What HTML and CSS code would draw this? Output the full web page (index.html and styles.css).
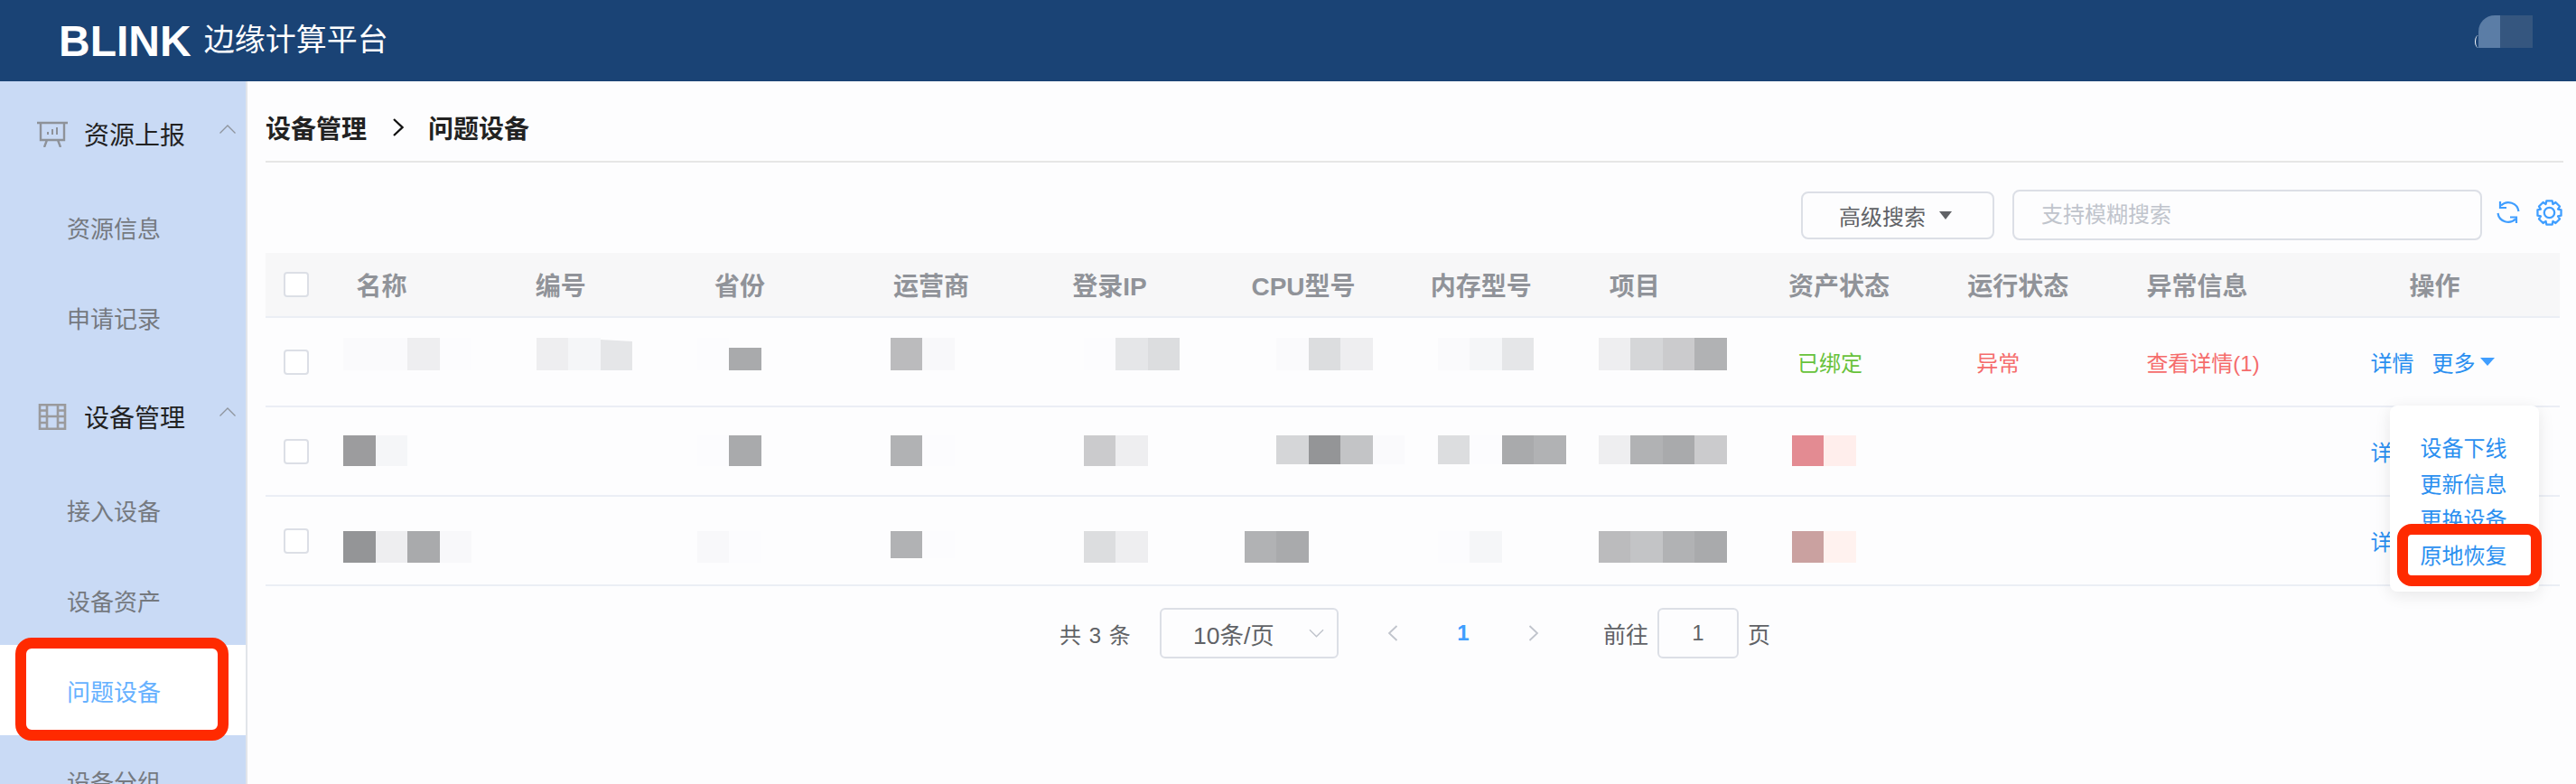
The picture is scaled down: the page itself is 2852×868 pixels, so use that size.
FILE: index.html
```html
<!DOCTYPE html>
<html lang="zh-CN">
<head>
    <meta charset="UTF-8">
    <title>BLINK 边缘计算平台</title>
    <link rel="stylesheet" href="styles.css">
</head>
<body>
    <div class="topbar">
        <span class="brand">BLINK</span>
        <span class="brand-sub">边缘计算平台</span>
        <div class="avatar"><span class="avatar-a"></span><span class="avatar-b"></span></div>
    </div>
    <div class="main">
        <div class="sidebar">
            <div class="menu-head">
                <svg class="menu-icon" viewBox="0 0 34 29" fill="none" stroke="#8e9299" stroke-width="2.4">
                    <path d="M0 2h34M4 2v19h26V2M11 21l-3 8M23 21l3 8"/>
                    <path d="M12 12v3M17 9v6M22 7v8" stroke-width="2"/>
                </svg>
                <span class="menu-title">资源上报</span>
                <svg class="menu-arrow" viewBox="0 0 18 10" fill="none" stroke="#8f959e" stroke-width="1.3"><path d="M0.5 9.5L9 1l8.500 8.500"/></svg>
            </div>
            <div class="menu-list first">
                <div class="menu-item">资源信息</div>
                <div class="menu-item">申请记录</div>
            </div>
            <div class="menu-head second">
                <svg class="menu-icon" viewBox="0 0 34 29" fill="none" stroke="#9a9a9c" stroke-width="2.6">
                    <path d="M3 1.300h28v26.400H3zM11 1.300v26.400M23 1.300v26.400M11 14h12M3 7.500h8M3 14h8M3 21h8M23 7.500h8M23 14h8M23 21h8"/>
                </svg>
                <span class="menu-title">设备管理</span>
                <svg class="menu-arrow" viewBox="0 0 18 10" fill="none" stroke="#8f959e" stroke-width="1.3"><path d="M0.5 9.5L9 1l8.500 8.500"/></svg>
            </div>
            <div class="menu-list">
                <div class="menu-item">接入设备</div>
                <div class="menu-item">设备资产</div>
                <div class="menu-item active">问题设备</div>
                <div class="menu-item">设备分组</div>
            </div>
        </div>

        <div class="content">
            <div class="breadcrumb">
                <span>设备管理</span>
                <svg class="crumb-sep" viewBox="0 0 12 20" fill="none" stroke="#111" stroke-width="2.300"><path d="M1 1l9.500 9L1 19"/></svg>
                <span>问题设备</span>
            </div>

            <div class="toolbar">
                <div class="adv-btn">高级搜索<i class="adv-caret"></i></div>
                <div class="search-box">支持模糊搜索</div>
                <svg class="tool-icon refresh" viewBox="0 0 26 26" fill="none" stroke="#409eff" stroke-width="2.200">
                    <path d="M24.500 12A11.500 11.500 0 0 0 5 5.500M4 1v7h7"/>
                    <path d="M1.500 14A11.500 11.500 0 0 0 21 20.500M15 18.500h7V25"/>
                </svg>
                <svg class="tool-icon gear" viewBox="0 0 28 28" fill="none" stroke="#409eff" stroke-width="2.200" stroke-linejoin="round">
                    <path d="M26.600 10.900V17.100L23.200 17.800 25.100 20.700 20.700 25.100 17.800 23.200 17.100 26.600H10.900L10.200 23.200 7.300 25.100 2.900 20.700 4.800 17.800 1.400 17.100V10.900L4.800 10.200 2.900 7.300 7.300 2.900 10.200 4.800 10.900 1.400H17.100L17.800 4.800 20.700 2.900 25.100 7.300 23.200 10.200Z"/>
                    <circle cx="14" cy="14" r="5.500"/>
                </svg>
            </div>

            <div class="table">
                <div class="tr thead">
                    <div class="cell"><span class="check"></span></div>
                    <div class="cell">名称</div>
                    <div class="cell">编号</div>
                    <div class="cell">省份</div>
                    <div class="cell">运营商</div>
                    <div class="cell">登录IP</div>
                    <div class="cell">CPU型号</div>
                    <div class="cell">内存型号</div>
                    <div class="cell">项目</div>
                    <div class="cell">资产状态</div>
                    <div class="cell">运行状态</div>
                    <div class="cell">异常信息</div>
                    <div class="cell op-head">操作</div>
                </div>

                <div class="tr row-1">
                    <div class="cell"><span class="check"></span></div>
                    <div class="cell col-name"><div class="mosaic"><i class="fa"></i><i class="fa"></i><i class="ee"></i><i class="fc"></i></div></div>
                    <div class="cell col-code"><div class="mosaic"><i class="ee"></i><i class="f5"></i><i class="e5 slant"></i></div></div>
                    <div class="cell col-prov"><div class="mosaic"><i class="fc"></i><i class="a9 short"></i></div></div>
                    <div class="cell col-isp"><div class="mosaic"><i class="bb"></i><i class="f8"></i></div></div>
                    <div class="cell col-ip"><div class="mosaic"><i class="fc"></i><i class="e5"></i><i class="dd"></i></div></div>
                    <div class="cell col-cpu"><div class="mosaic"><i class="none"></i><i class="fa"></i><i class="dd"></i><i class="ee"></i></div></div>
                    <div class="cell col-mem"><div class="mosaic"><i class="fa"></i><i class="f5"></i><i class="e5"></i></div></div>
                    <div class="cell col-proj"><div class="mosaic"><i class="ee"></i><i class="d5"></i><i class="cc"></i><i class="b1"></i></div></div>
                    <div class="cell status status-ok">已绑定</div>
                    <div class="cell status status-bad">异常</div>
                    <div class="cell status-bad">查看详情(1)</div>
                    <div class="cell op">
                        <span>详情</span><span class="op-more">更多<i class="more-caret"></i></span>
                        <div class="dropdown">
                            <div class="drop-item">设备下线</div>
                            <div class="drop-item">更新信息</div>
                            <div class="drop-item">更换设备</div>
                            <div class="drop-item marked">原地恢复</div>
                        </div>
                    </div>
                </div>

                <div class="tr row-2">
                    <div class="cell"><span class="check"></span></div>
                    <div class="cell col-name"><div class="mosaic"><i class="c9c"></i><i class="f5"></i></div></div>
                    <div class="cell col-code"></div>
                    <div class="cell col-prov"><div class="mosaic"><i class="fc"></i><i class="a9"></i></div></div>
                    <div class="cell col-isp"><div class="mosaic"><i class="b1"></i><i class="fc"></i></div></div>
                    <div class="cell col-ip"><div class="mosaic"><i class="cc"></i><i class="ee"></i></div></div>
                    <div class="cell col-cpu"><div class="mosaic h32"><i class="none"></i><i class="d5"></i><i class="c94"></i><i class="c3"></i><i class="fa"></i></div></div>
                    <div class="cell col-mem"><div class="mosaic h32"><i class="dd"></i><i class="fc"></i><i class="a9"></i><i class="b1"></i></div></div>
                    <div class="cell col-proj"><div class="mosaic h32"><i class="ee"></i><i class="b1"></i><i class="a9"></i><i class="cc"></i></div></div>
                    <div class="cell col-asset"><div class="mosaic"><i class="rose"></i><i class="blush"></i></div></div>
                    <div class="cell"></div>
                    <div class="cell"></div>
                    <div class="cell op"><span>详情</span></div>
                </div>

                <div class="tr row-3">
                    <div class="cell"><span class="check"></span></div>
                    <div class="cell col-name"><div class="mosaic"><i class="c94"></i><i class="ee"></i><i class="a9"></i><i class="f8"></i></div></div>
                    <div class="cell col-code"></div>
                    <div class="cell col-prov"><div class="mosaic"><i class="f8"></i><i class="fc"></i></div></div>
                    <div class="cell col-isp"><div class="mosaic h30"><i class="b1"></i><i class="fc"></i></div></div>
                    <div class="cell col-ip"><div class="mosaic"><i class="dd"></i><i class="ee"></i></div></div>
                    <div class="cell col-cpu"><div class="mosaic"><i class="b1"></i><i class="a9"></i></div></div>
                    <div class="cell col-mem"><div class="mosaic"><i class="fc"></i><i class="f5"></i></div></div>
                    <div class="cell col-proj"><div class="mosaic"><i class="bb"></i><i class="c3"></i><i class="b1"></i><i class="a9"></i></div></div>
                    <div class="cell col-asset"><div class="mosaic"><i class="rose-dk"></i><i class="blush-lt"></i></div></div>
                    <div class="cell"></div>
                    <div class="cell"></div>
                    <div class="cell op"><span>详情</span></div>
                </div>
            </div>

            <div class="pager">
                <span class="pg-total">共 3 条</span>
                <div class="pg-size">
                    <span>10条/页</span>
                    <svg class="pg-size-arrow" viewBox="0 0 18 10" fill="none" stroke="#c0c4cc" stroke-width="1.500"><path d="M1 1l8 8 8-8"/></svg>
                </div>
                <div class="pg-btn"><svg viewBox="0 0 12 18" fill="none" stroke="#c0c4cc" stroke-width="1.800"><path d="M10.500 1L2 9l8.500 8"/></svg></div>
                <div class="pg-btn current">1</div>
                <div class="pg-btn"><svg viewBox="0 0 12 18" fill="none" stroke="#c0c4cc" stroke-width="1.800"><path d="M1.500 1L10 9l-8.500 8"/></svg></div>
                <span class="pg-goto">前往</span>
                <div class="pg-input">1</div>
                <span class="pg-unit">页</span>
            </div>
        </div>
    </div>
</body>
</html>
```

FILE: styles.css
```css
*, *::before, *::after {
    margin: 0;
    padding: 0;
    box-sizing: border-box;
}
body {
    width: 2852px;
    height: 868px;
    overflow: hidden;
    display: flex;
    flex-direction: column;
    background: #fdfdfe;
    font-family: "Liberation Sans", "Noto Sans CJK SC", sans-serif;
    font-size: 24px;
    color: #606266;
}

/* top bar */
.topbar {
    height: 90px;
    flex: none;
    display: flex;
    align-items: center;
    padding-left: 65px;
    background: #1a4375;
    color: #fff;
}
.brand {
    font-size: 48px;
    font-weight: 700;
}
.brand-sub {
    margin-left: 14px;
    margin-bottom: 8px;
    font-size: 34px;
}
.avatar {
    position: relative;
    display: flex;
    margin-left: auto;
    margin-right: 48px;
    margin-top: -20px;
}
.avatar::before {
    content: '';
    position: absolute;
    left: -4px;
    bottom: 0;
    width: 8px;
    height: 14px;
    border-left: 1px solid #fff;
    border-radius: 50%;
}
.avatar-a {
    width: 24px;
    height: 36px;
    background: #5b7da6;
    border-top-left-radius: 18px;
}
.avatar-b {
    width: 36px;
    height: 36px;
    background: #35567f;
}

/* sidebar */
.main {
    flex: 1;
    display: flex;
    min-height: 0;
}
.sidebar {
    width: 274px;
    flex: none;
    padding-top: 8px;
    overflow: hidden;
    background: #c9daf5;
    border-right: 2px solid #e2e5ea;
}
.menu-head {
    height: 100px;
    display: flex;
    align-items: center;
    padding-left: 41px;
    color: #222;
}
.menu-head.second {
    margin-top: 7px;
}
.menu-icon {
    width: 34px;
    height: 29px;
    flex: none;
}
.menu-title {
    margin-left: 18px;
    font-size: 28px;
}
.menu-arrow {
    width: 18px;
    height: 10px;
    margin-left: 38px;
    margin-top: -10px;
}
.menu-list {
    margin-top: 3px;
}
.menu-list.first {
    margin-top: 6px;
}
.menu-item {
    position: relative;
    height: 100px;
    padding-left: 74px;
    line-height: 106px;
    font-size: 26px;
    color: #75797f;
}
.menu-list.first .menu-item {
    line-height: 100px;
}
.menu-item.active {
    background: #fff;
    color: #66b1ff;
}
.menu-item.active::after {
    content: '';
    position: absolute;
    top: -8px;
    bottom: -6px;
    left: 17px;
    width: 236px;
    border: 12px solid #ff2a00;
    border-radius: 18px;
}

/* content */
.content {
    flex: 1;
    min-width: 0;
    padding: 0 14px 0 20px;
}
.breadcrumb {
    height: 90px;
    display: flex;
    align-items: center;
    padding-top: 14px;
    font-size: 28px;
    font-weight: 700;
    color: #222;
    border-bottom: 2px solid #e6e6e6;
}
.crumb-sep {
    width: 12px;
    height: 20px;
    margin: 0 27px 0 29px;
}
.toolbar {
    height: 56px;
    margin-top: 30px;
    display: flex;
    align-items: center;
    justify-content: flex-end;
}
.adv-btn {
    width: 214px;
    height: 53px;
    display: flex;
    align-items: center;
    padding-left: 40px;
    border: 2px solid #dcdfe6;
    border-radius: 8px;
    color: #606266;
}
.adv-caret {
    width: 0;
    height: 0;
    margin-left: 15px;
    border-left: 7px solid transparent;
    border-right: 7px solid transparent;
    border-top: 9px solid #606266;
}
.search-box {
    width: 520px;
    height: 56px;
    margin-left: 20px;
    padding-left: 30px;
    line-height: 52px;
    color: #c0c4cc;
    border: 2px solid #dcdfe6;
    border-radius: 8px;
}
.tool-icon {
    flex: none;
}
.refresh {
    width: 26px;
    height: 26px;
    margin-left: 16px;
    margin-top: -6px;
}
.gear {
    width: 29px;
    height: 29px;
    margin-left: 18px;
    margin-top: -6px;
    margin-right: 1px;
}

/* table */
.table {
    position: relative;
    margin-top: 14px;
    margin-right: 4px;
}
.tr {
    display: grid;
    grid-template-columns: 100.500px repeat(11, 198.200px) 1fr;
    height: 99px;
    border-bottom: 2px solid #ebeef5;
}
.thead {
    height: 72px;
    background: #f7f7f8;
    font-size: 28px;
    font-weight: 700;
    color: #909399;
}
.cell {
    display: flex;
    align-items: center;
    min-width: 0;
}
.check {
    width: 28px;
    height: 28px;
    margin-left: 20px;
    background: #fff;
    border: 2px solid #dcdfe6;
    border-radius: 4px;
}
.op-head {
    padding-left: 93px;
}
.status {
    padding-left: 10px;
}
.status-ok {
    color: #67c23a;
}
.status-bad {
    color: #f56c6c;
}
.op {
    position: relative;
    padding-left: 50px;
    color: #2b8ff0;
}
.op-more {
    display: flex;
    align-items: center;
    margin-left: 20px;
}
.more-caret {
    width: 0;
    height: 0;
    margin-left: 5px;
    border-left: 8px solid transparent;
    border-right: 8px solid transparent;
    border-top: 9px solid #409eff;
}

/* dropdown from the 更多 link */
.dropdown {
    position: absolute;
    top: 97px;
    left: 71px;
    z-index: 2;
    width: 165px;
    height: 206px;
    padding-top: 28px;
    background: #fff;
    border-radius: 8px;
    box-shadow: 0 4px 18px rgba(0, 0, 0, 0.09);
}
.drop-item {
    position: relative;
    height: 39.500px;
    padding-left: 34px;
    line-height: 39.500px;
    color: #2b8ff0;
}
.drop-item.marked::after {
    content: '';
    position: absolute;
    top: -16px;
    bottom: -14px;
    left: 8px;
    right: -3px;
    border: 12px solid #ff2a00;
    border-radius: 16px;
}

/* blurred values */
.mosaic {
    display: flex;
    align-self: flex-start;
    height: 36px;
}
.mosaic i {
    display: block;
    width: 35.500px;
    flex: none;
}
.row-1 .mosaic { margin-top: 22px; }
.row-2 .mosaic { margin-top: 31px; height: 34px; }
.row-3 .mosaic { margin-top: 38px; height: 35px; }
.row-2 .mosaic.h32 { height: 32px; }
.row-3 .mosaic.h30 { height: 30px; }
.col-name .mosaic { margin-left: -14.500px; }
.col-code .mosaic { margin-left: 1.300px; }
.col-prov .mosaic { margin-left: -18.900px; }
.col-isp .mosaic { margin-left: -3.100px; }
.col-ip .mosaic { margin-left: 12.700px; }
.col-cpu .mosaic { margin-left: -7.500px; }
.col-mem .mosaic { margin-left: 8.300px; }
.col-proj .mosaic { margin-left: -11.900px; }
.col-asset .mosaic { margin-left: 3.900px; }
.mosaic .short { height: 25px; margin-top: 11px; }
.mosaic .slant { clip-path: polygon(0 2px, 100% 4px, 100% 100%, 0 100%); }
.none { background: transparent; }
.fc { background: #fcfcfe; }
.fa { background: #fafafc; }
.f8 { background: #f8f8fa; }
.f5 { background: #f5f6f8; }
.ee { background: #eeeef0; }
.e5 { background: #e5e6e8; }
.dd { background: #dcdddf; }
.d5 { background: #d5d6d8; }
.cc { background: #cbcbcd; }
.c3 { background: #c3c4c6; }
.bb { background: #bbbbbd; }
.b1 { background: #b1b2b4; }
.a9 { background: #a9aaac; }
.c9c { background: #9c9c9e; }
.c94 { background: #949597; }
.rose { background: #e38b92; }
.rose-dk { background: #caa1a0; }
.blush { background: #ffeeec; }
.blush-lt { background: #fff2ef; }

/* pagination */
.pager {
    display: flex;
    align-items: center;
    height: 56px;
    margin-top: 24px;
    padding-left: 879px;
}
.pg-total {
    width: 111px;
    flex: none;
    word-spacing: 2px;
}
.pg-size {
    width: 198px;
    height: 56px;
    flex: none;
    display: flex;
    align-items: center;
    padding-left: 35px;
    border: 2px solid #dcdfe6;
    border-radius: 6px;
    font-size: 26.500px;
}
.pg-size-arrow {
    width: 17px;
    height: 10px;
    margin-left: auto;
    margin-right: 14px;
}
.pg-btn {
    width: 78px;
    flex: none;
    display: flex;
    align-items: center;
    justify-content: center;
}
.pg-btn:nth-child(3) {
    margin-left: 21px;
}
.pg-btn svg {
    width: 12px;
    height: 18px;
}
.current {
    font-weight: 700;
    color: #409eff;
}
.pg-goto {
    margin-left: 38px;
    font-size: 25px;
}
.pg-input {
    width: 90px;
    height: 56px;
    margin-left: 10px;
    text-align: center;
    line-height: 52px;
    border: 2px solid #dcdfe6;
    border-radius: 6px;
}
.pg-unit {
    margin-left: 10px;
    font-size: 25px;
}
```
